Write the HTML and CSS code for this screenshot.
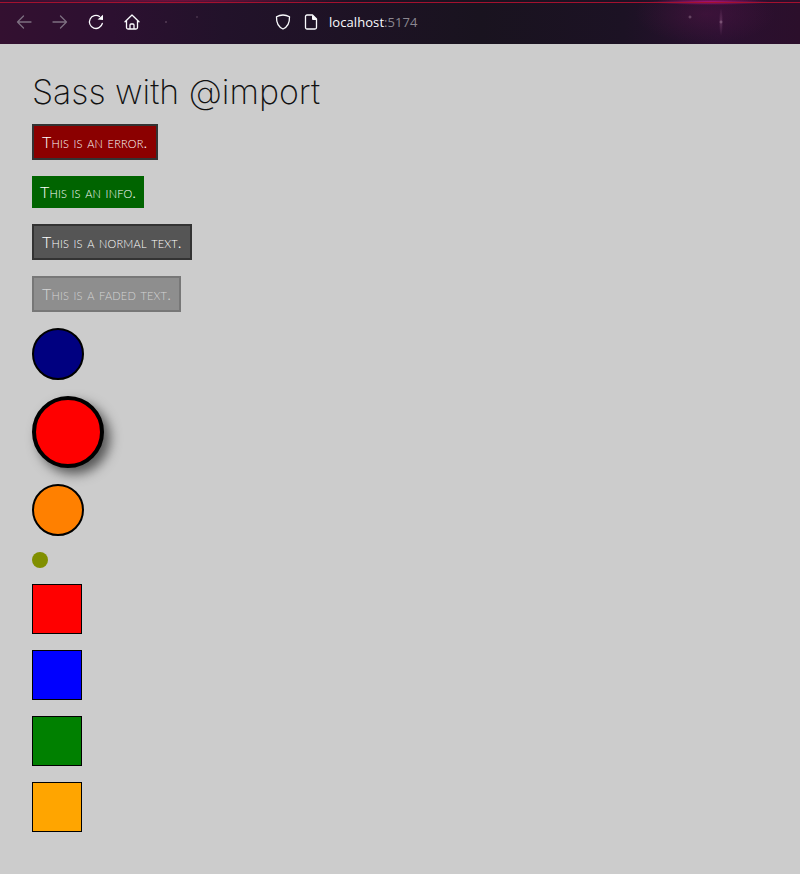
FILE: index.html
```html
<!DOCTYPE html>
<html lang="en">
<head>
<meta charset="utf-8">
<title>Sass with @import</title>
<link rel="stylesheet" href="styles.css">
</head>
<body>
<header class="toolbar">
  <div class="nav">
    <svg class="icon dim" viewBox="0 0 16 16"><path d="M15 8H1.500M7.500 2 1.500 8l6 6"/></svg>
    <svg class="icon dim" viewBox="0 0 16 16"><path d="M1 8h13.500M8.500 2l6 6-6 6"/></svg>
    <svg class="icon" viewBox="0 0 16 16"><path d="M14.300 9.500A6.500 6.500 0 1 1 11.500 2.500"/><path class="solid" d="M9.600 5.400 15 6V0.800z"/></svg>
    <svg class="icon" viewBox="0 0 16 16"><path d="M1 7.800 8 1l7 6.800M2.500 6.500v7A1.500 1.500 0 0 0 4 15h8a1.500 1.500 0 0 0 1.500-1.500v-7M6 15v-4a1 1 0 0 1 1-1h2a1 1 0 0 1 1 1v4"/></svg>
  </div>
  <div class="address">
    <svg class="icon shield" viewBox="0 0 16 16"><path d="M8 1c2.200 0 4.600.7 6.500 1.800C14.700 8.800 12.700 13 8 15 3.300 13 1.300 8.800 1.500 2.800 3.400 1.700 5.800 1 8 1z"/></svg>
    <svg class="icon page" viewBox="0 0 16 16"><path d="M2.500 2.500A1.500 1.500 0 0 1 4 1h5.500l4 4v8.500A1.500 1.500 0 0 1 12 15H4a1.500 1.500 0 0 1-1.500-1.500z"/><path class="solid" d="M9 1.500h1L13.500 5v1H10a1 1 0 0 1-1-1z"/></svg>
    <span class="url">localhost<span class="port">:5174</span></span>
  </div>
</header>
<main class="content">
  <h1 class="title">Sass with @import</h1>
  <div class="alert error">This is an error.</div>
  <div class="alert info">This is an info.</div>
  <div class="alert normal">This is a normal text.</div>
  <div class="alert faded">This is a faded text.</div>
  <div class="circle navy"></div>
  <div class="circle big"></div>
  <div class="circle orange"></div>
  <div class="dot"></div>
  <div class="square red"></div>
  <div class="square blue"></div>
  <div class="square green"></div>
  <div class="square amber"></div>
</main>
</body>
</html>
```
FILE: styles.css
```css
* { box-sizing: border-box; }
html, body { margin: 0; padding: 0; }
body { background: #cccccc; height: 874px; overflow: hidden; font-family: "Inter", sans-serif; }

.toolbar {
  height: 44px;
  display: flex;
  align-items: center;
  background:
    radial-gradient(circle 2px at 690px 17px, rgba(200,170,190,.5), transparent),
    radial-gradient(circle 2px at 721px 22px, rgba(200,170,190,.5), transparent),
    radial-gradient(circle 1.500px at 166px 22px, rgba(200,170,190,.4), transparent),
    radial-gradient(circle 1.500px at 197px 17px, rgba(200,170,190,.3), transparent),
    radial-gradient(ellipse 2px 14px at 721px 22px, rgba(190,120,170,.3), transparent),
    linear-gradient(#0000 0 2px, #a3112f 2px 3px, #0000 3px),
    radial-gradient(ellipse 60px 3px at 710px 2px, #b0127a, transparent),
    radial-gradient(ellipse 70px 30px at 705px 14px, rgba(110,25,85,.28), transparent),
    radial-gradient(ellipse 170px 4px at 180px 0, rgba(150,16,70,.7), transparent),
    linear-gradient(90deg, #331030 0, #2c1030 14%, #22122a 28%, #19131f 60%, #1c1224 78%, #2a1030 90%, #2b0f2b 100%);
}
.nav { display: flex; align-items: center; gap: 20px; padding-left: 16px; }
.icon { width: 16px; height: 16px; fill: none; stroke: #fbfbfe; stroke-width: 1.300; stroke-linecap: round; stroke-linejoin: round; display: block; }
.icon.dim { stroke: #7d6f80; }
.solid { fill: #fbfbfe; stroke: none; }
.address { display: flex; align-items: center; margin-left: 135px; }
.shield { margin-right: 12px; }
.page { margin-right: 10px; }
.url { font-family: "Open Sans", sans-serif; font-size: 13px; letter-spacing: .07px; color: #fbfbfe; }
.port { color: #8b8790; }

.content { display: flex; flex-direction: column; align-items: flex-start; padding: 24px 32px 0; gap: 16px; }
.title { margin: 0; font-family: "Inter", sans-serif; font-weight: 200; font-size: 33.900px; line-height: 48px; height: 40px; color: #111111; }
.alert { font-family: "Lato", sans-serif; font-weight: 300; font-variant: small-caps; font-size: 16px; letter-spacing: .18px; line-height: 16px; padding: 8px; color: #ffffff; white-space: nowrap; }
.error { background: #8b0000; border: 2px solid #333333; }
.info { background: #006400; }
.normal { background: #555555; border: 2px solid #333333; }
.faded { background: #8e8e8e; border: 2px solid #777777; color: #d4d4d4; }

.circle { width: 52px; height: 52px; border-radius: 50%; border: 2px solid #000000; }
.navy { background: #000080; }
.big { width: 72px; height: 72px; border-width: 4px; background: #ff0000; box-shadow: 6px 6px 12px #555555; }
.orange { background: #ff8000; }
.dot { width: 16px; height: 16px; border-radius: 50%; background: #808f00; }
.square { width: 50px; height: 50px; border: 1px solid #000000; }
.red { background: #ff0000; }
.blue { background: #0000ff; }
.green { background: #008000; }
.amber { background: #ffa500; }
```
